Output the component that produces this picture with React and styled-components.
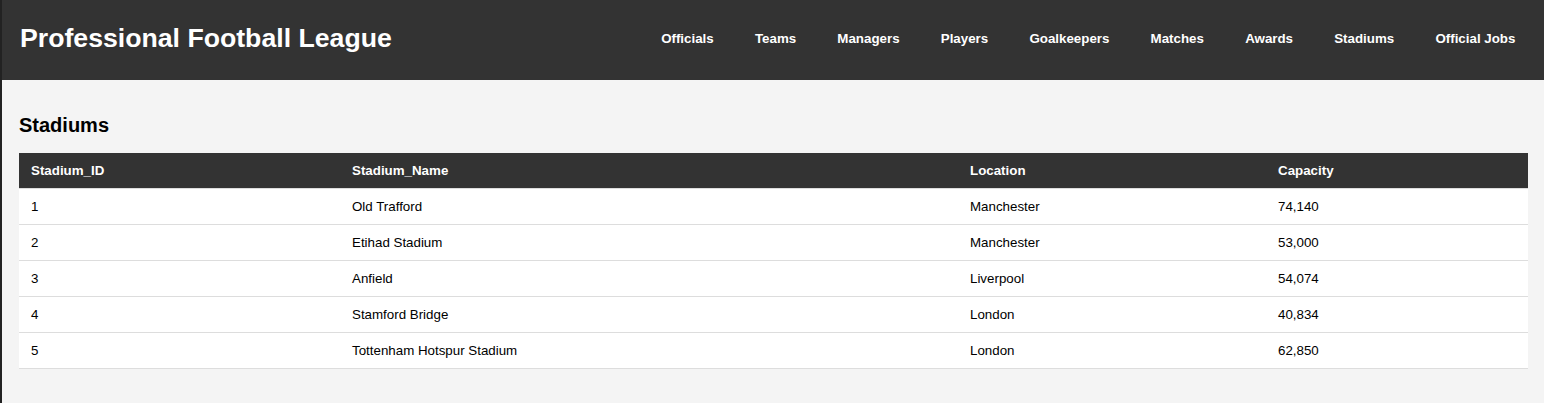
import styled, { createGlobalStyle } from "styled-components";

const GlobalStyle = createGlobalStyle`
    html, body {
        margin: 0;
        padding: 0;
        background-color: #f4f4f4;
        font-family: "Liberation Sans", Arial, sans-serif;
    }
`

const Page = styled.div`
    min-height: 403px;
    border-left: 2px solid #222;
    background-color: #f4f4f4;
    box-sizing: border-box;
`

const Header = styled.header`
    display: flex;
    align-items: center;
    justify-content: space-between;
    height: 80px;
    padding: 0 8px 0 18px;
    background-color: #333;
    color: #fff;
`

const Title = styled.h1`
    margin: 0 0 4px;
    font-size: 26.67px;
    font-weight: bold;
    line-height: 30px;
`

const Nav = styled.nav`
    display: flex;
    margin-bottom: 2px;
`

const NavLink = styled.a`
    padding: 0 20.6px;
    color: #fff;
    font-size: 13.33px;
    font-weight: bold;
    text-decoration: none;
    line-height: 16px;
`

const Main = styled.main`
    padding: 34px 16px 34px 17px;
`

const Heading = styled.h2`
    margin: 0 0 16px;
    font-size: 20px;
    line-height: 23px;
    font-weight: bold;
    color: #000;
`

const Table = styled.table`
    width: 100%;
    border-collapse: collapse;
    table-layout: fixed;
    background-color: #fff;
    font-size: 13.33px;
`

const Th = styled.th`
    padding: 10px 12px;
    line-height: 15px;
    text-align: left;
    background-color: #333;
    color: #fff;
    font-weight: bold;
    border-bottom: 1px solid #ddd;
`

const Td = styled.td`
    padding: 10px 12px;
    line-height: 15px;
    color: #000;
    border-bottom: 1px solid #ddd;
`

const links = ["Officials", "Teams", "Managers", "Players", "Goalkeepers", "Matches", "Awards", "Stadiums", "Official Jobs"];

const stadiums = [
    { id: 1, name: "Old Trafford", location: "Manchester", capacity: "74,140" },
    { id: 2, name: "Etihad Stadium", location: "Manchester", capacity: "53,000" },
    { id: 3, name: "Anfield", location: "Liverpool", capacity: "54,074" },
    { id: 4, name: "Stamford Bridge", location: "London", capacity: "40,834" },
    { id: 5, name: "Tottenham Hotspur Stadium", location: "London", capacity: "62,850" },
];

export default function App() {
    return (
        <>
            <GlobalStyle />
            <Page>
                <Header>
                    <Title>Professional Football League</Title>
                    <Nav>
                        {links.map(link => (
                            <NavLink key={link} href="#">{link}</NavLink>
                        ))}
                    </Nav>
                </Header>
                <Main>
                    <Heading>Stadiums</Heading>
                    <Table>
                        <colgroup>
                            <col style={{ width: 321 }} />
                            <col style={{ width: 618 }} />
                            <col style={{ width: 308 }} />
                            <col />
                        </colgroup>
                        <thead>
                            <tr>
                                <Th>Stadium_ID</Th>
                                <Th>Stadium_Name</Th>
                                <Th>Location</Th>
                                <Th>Capacity</Th>
                            </tr>
                        </thead>
                        <tbody>
                            {stadiums.map(s => (
                                <tr key={s.id}>
                                    <Td>{s.id}</Td>
                                    <Td>{s.name}</Td>
                                    <Td>{s.location}</Td>
                                    <Td>{s.capacity}</Td>
                                </tr>
                            ))}
                        </tbody>
                    </Table>
                </Main>
            </Page>
        </>
    )
}
